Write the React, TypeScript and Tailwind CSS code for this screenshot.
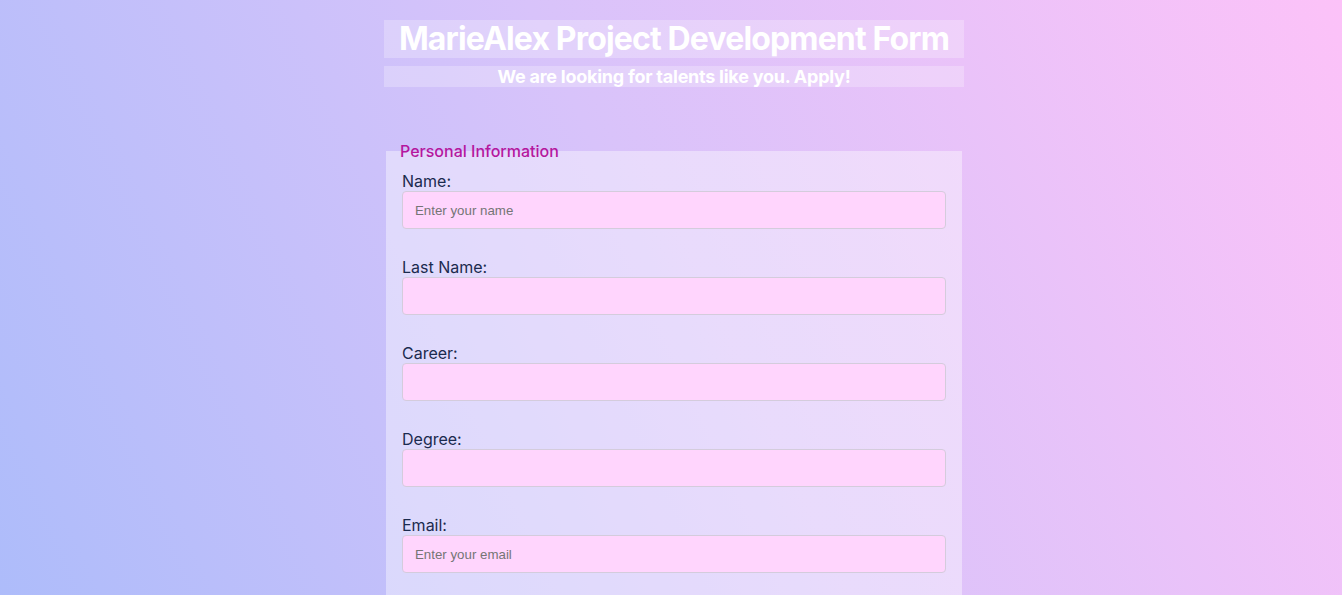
import React from "react";

const fields = [
  { label: "Name:", placeholder: "Enter your name" },
  { label: "Last Name:", placeholder: "" },
  { label: "Career:", placeholder: "" },
  { label: "Degree:", placeholder: "" },
  { label: "Email:", placeholder: "Enter your email" },
];

export default function App() {
  return (
    <div className="min-h-[595px] w-full bg-[linear-gradient(65deg,#adbcfa_0%,#d8c3fa_50%,#fcc2f8_100%)] font-['Inter',sans-serif] overflow-hidden">
      <div className="mx-auto w-[586px] pl-[6px] pt-[20px]">
        <div className="bg-white/25 h-[38px] flex items-center justify-center">
          <h1 className="text-[32px] leading-[38px] font-bold text-white tracking-[-0.85px]">
            MarieAlex Project Development Form
          </h1>
        </div>
        <div className="bg-white/25 h-[21px] mt-[8px] flex items-center justify-center">
          <p className="text-[18px] leading-[21px] font-bold text-white tracking-[-0.25px]">
            We are looking for talents like you. Apply!
          </p>
        </div>
        <fieldset className="mt-[54px] mx-[2px] bg-white/40 border-0 px-4 pt-[12px] pb-4">
          <legend className="ml-[-2px] px-0 text-[16px] leading-[19px] font-medium text-[#b5179e] translate-y-[1px]">
            Personal Information
          </legend>
          {fields.map((f) => (
            <div key={f.label} className="mb-[29px]">
              <label className="block text-[16px] leading-[19px] text-[#1b2a4e]">
                {f.label}
              </label>
              <input
                type="text"
                placeholder={f.placeholder}
                className="block w-full h-[38px] rounded-[4px] border border-[#d4ccdc] bg-[#ffd5fd] px-3 text-[13.3px] font-['Liberation_Sans',Arial,sans-serif] text-[#333] placeholder:text-[#757575] outline-none"
              />
            </div>
          ))}
        </fieldset>
      </div>
    </div>
  );
}
